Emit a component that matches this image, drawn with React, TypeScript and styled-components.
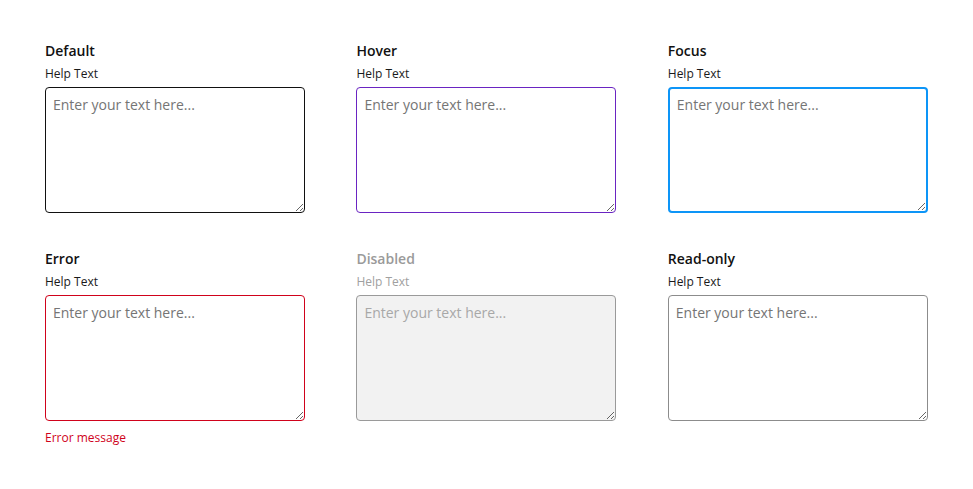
import React from "react";
import styled, { createGlobalStyle, css } from "styled-components";

const Global = createGlobalStyle`
  * { box-sizing: border-box; }
  body {
    margin: 0;
    background: #ffffff;
    font-family: "Open Sans", "Noto Sans", sans-serif;
    color: #1a1a1a;
  }
`;

type State = "default" | "hover" | "focus" | "error" | "disabled" | "readonly";

const Page = styled.div`
  padding: 41px 45px 40px;
  display: grid;
  grid-template-columns: repeat(3, 260px);
  column-gap: 51.4px;
  row-gap: 36px;
  align-items: start;
`;

const Field = styled.div`
  display: flex;
  flex-direction: column;
`;

const Title = styled.div<{ $muted?: boolean }>`
  font-size: 14px;
  line-height: 20px;
  font-weight: 600;
  color: ${(p) => (p.$muted ? "#9a9a9a" : "#111111")};
  margin-bottom: 5px;
`;

const Help = styled.div<{ $muted?: boolean }>`
  font-size: 12px;
  line-height: 16px;
  color: ${(p) => (p.$muted ? "#a0a0a0" : "#1a1a1a")};
  margin-bottom: 5px;
`;

const borderFor = (s: State) => {
  switch (s) {
    case "hover":
      return css`border: 1px solid #6a24c2;`;
    case "focus":
      return css`border: 2px solid #0d95f7; padding-top: 6px;`;
    case "error":
      return css`border: 1px solid #d0021b;`;
    case "disabled":
      return css`border: 1px solid #9a9a9a; background: #f2f2f2;`;
    case "readonly":
      return css`border: 1px solid #8c8c8c;`;
    default:
      return css`border: 1px solid #111111;`;
  }
};

const Area = styled.textarea<{ $state: State }>`
  width: 260px;
  height: 126px;
  margin: 0;
  padding: 7px 7px 6px;
  border-radius: 4px;
  background: #ffffff;
  font-family: "Open Sans", "Noto Sans", sans-serif;
  font-size: 14px;
  line-height: 20px;
  color: #1a1a1a;
  resize: vertical;
  outline: none;
  ${(p) => borderFor(p.$state)}
  &::placeholder {
    color: ${(p) => (p.$state === "disabled" ? "#a8a8a8" : "#757575")};
    opacity: 1;
  }
`;

const ErrorText = styled.div`
  margin-top: 9px;
  font-size: 12px;
  line-height: 16px;
  color: #d0021b;
`;

const items: { title: string; state: State }[] = [
  { title: "Default", state: "default" },
  { title: "Hover", state: "hover" },
  { title: "Focus", state: "focus" },
  { title: "Error", state: "error" },
  { title: "Disabled", state: "disabled" },
  { title: "Read-only", state: "readonly" },
];

export default function App() {
  return (
    <>
      <Global />
      <Page>
        {items.map((it) => {
          const muted = it.state === "disabled";
          return (
            <Field key={it.title}>
              <Title $muted={muted}>{it.title}</Title>
              <Help $muted={muted}>Help Text</Help>
              <Area
                $state={it.state}
                placeholder="Enter your text here..."
                disabled={it.state === "disabled"}
                readOnly={it.state === "readonly"}
              />
              {it.state === "error" && <ErrorText>Error message</ErrorText>}
            </Field>
          );
        })}
      </Page>
    </>
  );
}
